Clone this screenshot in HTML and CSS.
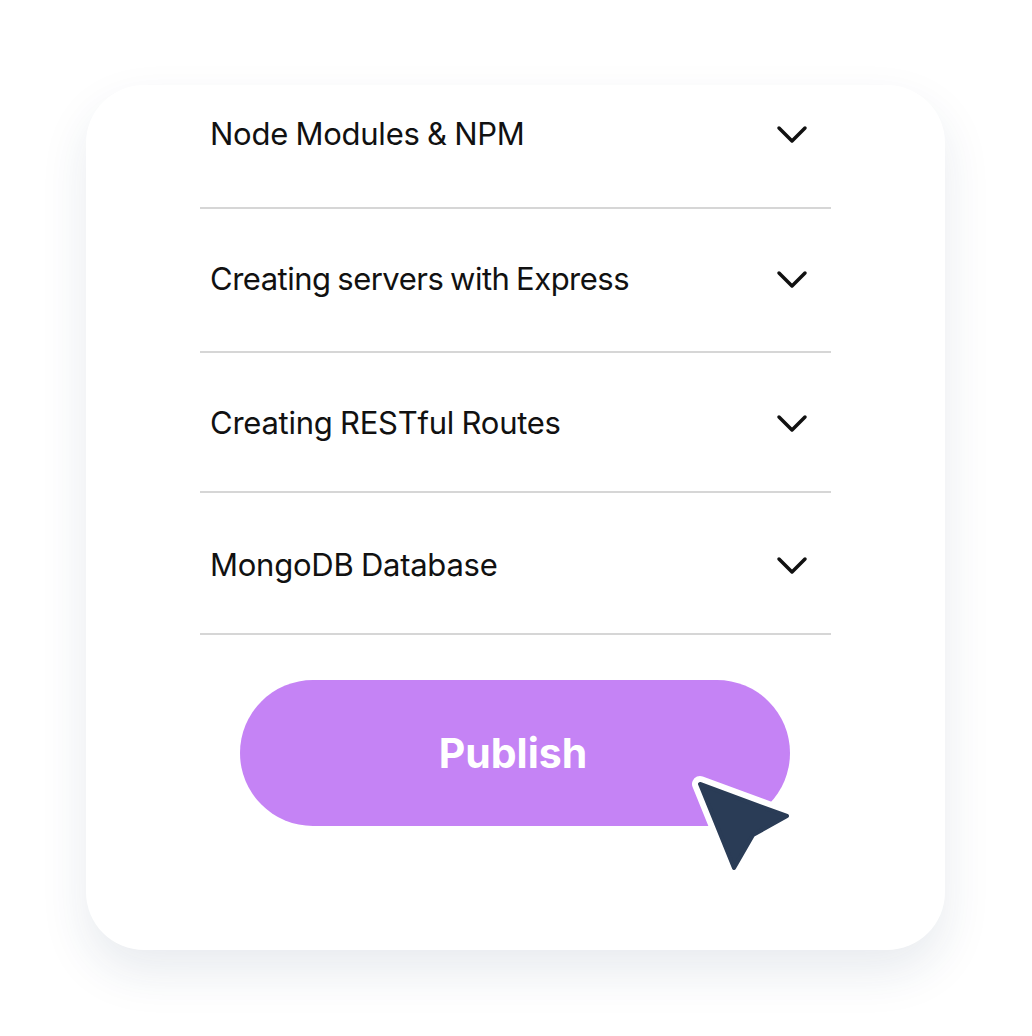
FILE: index.html
```html
<!DOCTYPE html>
<html lang="en">
<head>
<meta charset="utf-8">
<title>Course modules</title>
<link rel="stylesheet" href="styles.css">
</head>
<body>
<main class="card">
  <ul class="modules">
    <li class="module"><span class="module-title">Node Modules &amp; NPM</span><svg class="chevron" viewBox="0 0 32 20" width="32" height="20"><polyline points="3,3 16,16 29,3"/></svg></li>
    <li class="module"><span class="module-title module-title--tight">Creating servers with Express</span><svg class="chevron" viewBox="0 0 32 20" width="32" height="20"><polyline points="3,3 16,16 29,3"/></svg></li>
    <li class="module"><span class="module-title">Creating RESTful Routes</span><svg class="chevron" viewBox="0 0 32 20" width="32" height="20"><polyline points="3,3 16,16 29,3"/></svg></li>
    <li class="module"><span class="module-title">MongoDB Database</span><svg class="chevron" viewBox="0 0 32 20" width="32" height="20"><polyline points="3,3 16,16 29,3"/></svg></li>
  </ul>
  <div class="actions">
    <button class="publish" type="button">Publish</button>
    <svg class="cursor" viewBox="0 0 110 106" width="110" height="106">
      <polygon class="cursor-outline" points="10,10 97,42 63,61 44,94"/>
      <polygon class="cursor-fill" points="10,10 97,42 63,61 44,94"/>
    </svg>
  </div>
</main>
</body>
</html>
```
FILE: styles.css
```css
* { box-sizing: border-box; }

html, body {
  margin: 0;
  background: #ffffff;
}

body {
  padding: 85px 0 0 86px;
  min-height: 1036px;
  font-family: Inter, "Noto Sans", "Liberation Sans", sans-serif;
  color: #111111;
}

.card {
  width: 859px;
  height: 865px;
  background: #ffffff;
  border-radius: 58px;
  box-shadow: 0 22px 48px rgba(30, 55, 100, 0.10);
  padding: 0 114px;
  overflow: hidden;
}

.modules {
  list-style: none;
  margin: 0;
  padding: 0;
  width: 631px;
}

.module {
  display: flex;
  align-items: flex-start;
  justify-content: space-between;
  height: 142px;
  padding: 53px 23px 0 10px;
  border-bottom: 2px solid #d6d6d6;
}

.module:nth-child(1) {
  height: 124px;
  padding-top: 32px;
}

.module:nth-child(2) {
  height: 144px;
}

.module:nth-child(3) {
  height: 140px;
}

.module:nth-child(4) {
  padding-top: 55px;
}

.module-title {
  font-size: 31px;
  line-height: 34px;
  letter-spacing: -0.25px;
  word-spacing: -1px;
}

.module-title--tight {
  letter-spacing: -0.5px;
  word-spacing: -1.5px;
}

.chevron {
  margin-top: 8px;
  fill: none;
  stroke: #111111;
  stroke-width: 3.5;
  stroke-linecap: round;
  stroke-linejoin: round;
}

.actions {
  position: relative;
  margin: 45px 0 0 40px;
  width: 550px;
}

.publish {
  display: block;
  width: 550px;
  height: 146px;
  border: none;
  border-radius: 73px;
  background: #c583f5;
  color: #ffffff;
  font-family: Inter, "Noto Sans", "Liberation Sans", sans-serif;
  font-size: 41px;
  font-weight: 700;
  padding: 0 4px 0 0;
  cursor: pointer;
}

.cursor {
  position: absolute;
  left: 450px;
  top: 94px;
  overflow: visible;
}

.cursor-outline {
  fill: #ffffff;
  stroke: #ffffff;
  stroke-width: 16;
  stroke-linejoin: round;
}

.cursor-fill {
  fill: #2a3c56;
  stroke: #2a3c56;
  stroke-width: 4;
  stroke-linejoin: round;
}
```
